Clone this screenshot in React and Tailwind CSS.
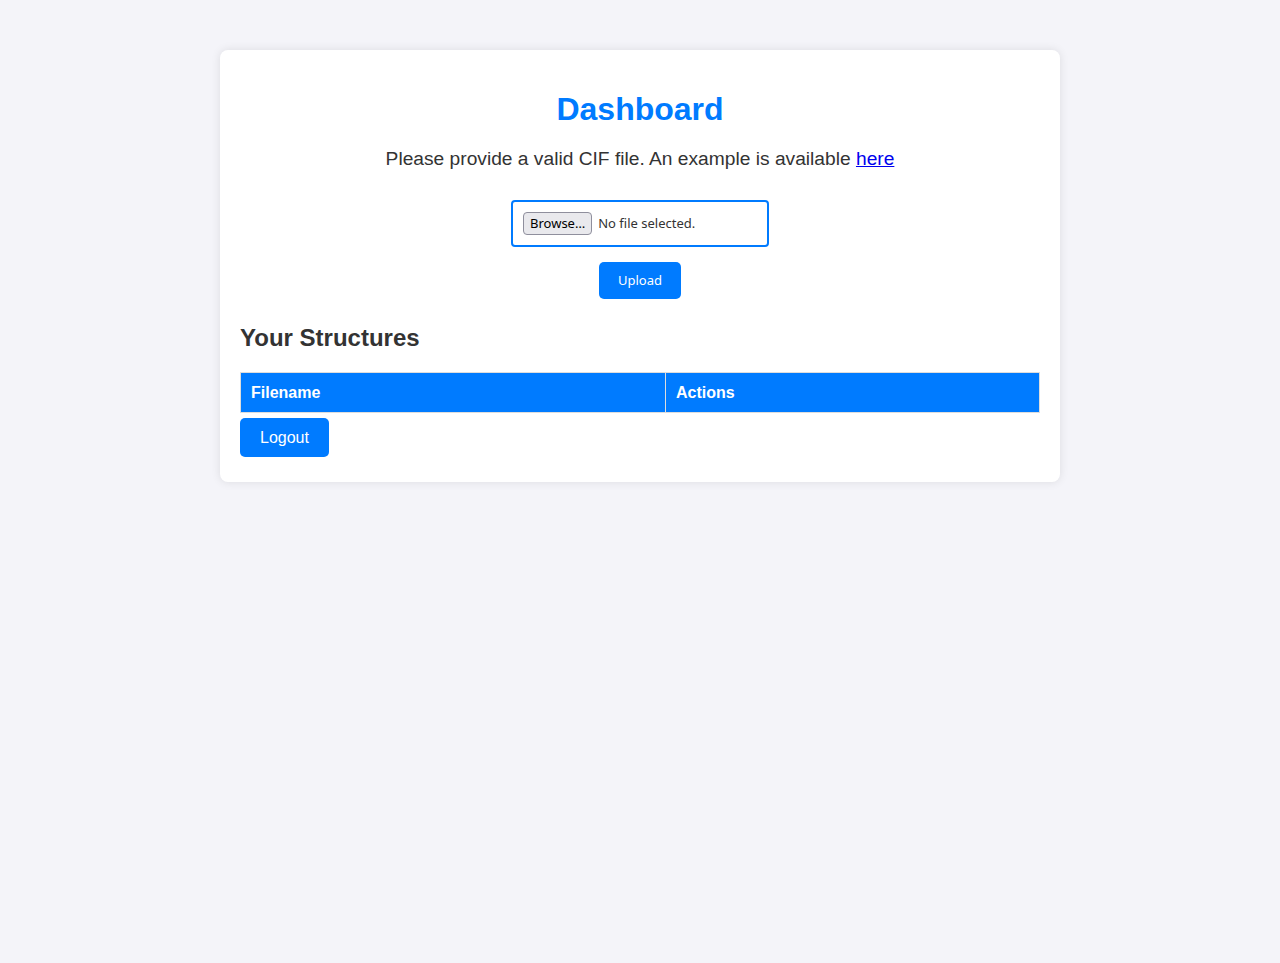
const Dashboard = () => {
  return (
    <div className="min-h-screen bg-[#f4f4f9] pt-[50px] font-['Liberation_Sans',Arial,sans-serif] text-[#333]">
      <div className="mx-auto w-[840px] rounded-lg bg-white p-5 shadow-[0_0_10px_rgba(0,0,0,0.1)]">
        <h1 className="mt-[21px] text-center text-[32px] font-bold leading-[37px] text-[#007bff]">
          Dashboard
        </h1>
        <p className="mt-[20px] text-center text-[19.2px] leading-[22px]">
          Please provide a valid CIF file. An example is available{' '}
          <a href="#" className="text-[#0000ee] underline">here</a>
        </p>

        <form className="mt-[30px] flex flex-col items-center font-['Noto_Sans',sans-serif]">
          {/* fake file input, rendered like firefox does */}
          <div className="flex w-[258px] items-center rounded border-2 border-[#007bff] p-[10px] text-[13px]">
            <span className="flex h-[23px] items-center rounded border border-[#8f8f9d] bg-[#e9e9ed] px-[6px] text-black">
              Browse…
            </span>
            <span className="ml-[6px] text-[#333]">No file selected.</span>
          </div>
          <button
            type="button"
            className="mt-[15px] h-[37px] w-[82px] rounded-[5px] bg-[#007bff] pt-px text-[13px] text-white"
          >
            Upload
          </button>
        </form>

        <h2 className="mt-[25px] text-[24px] font-bold leading-[28px]">Your Structures</h2>

        <table className="mt-[20px] w-full border-collapse">
          <thead>
            <tr className="bg-[#007bff] text-white">
              <th className="w-[425px] border border-[#ddd] p-[10px] text-left text-[16px] font-bold leading-[19px]">
                Filename
              </th>
              <th className="border border-[#ddd] p-[10px] text-left text-[16px] font-bold leading-[19px]">
                Actions
              </th>
            </tr>
          </thead>
          <tbody></tbody>
        </table>

        <button
          type="button"
          className="mt-[5px] mb-[5px] h-[39px] rounded-[5px] bg-[#007bff] px-5 text-[16px] text-white"
        >
          Logout
        </button>
      </div>
    </div>
  );
};

export default function App() {
  return <Dashboard />;
}
